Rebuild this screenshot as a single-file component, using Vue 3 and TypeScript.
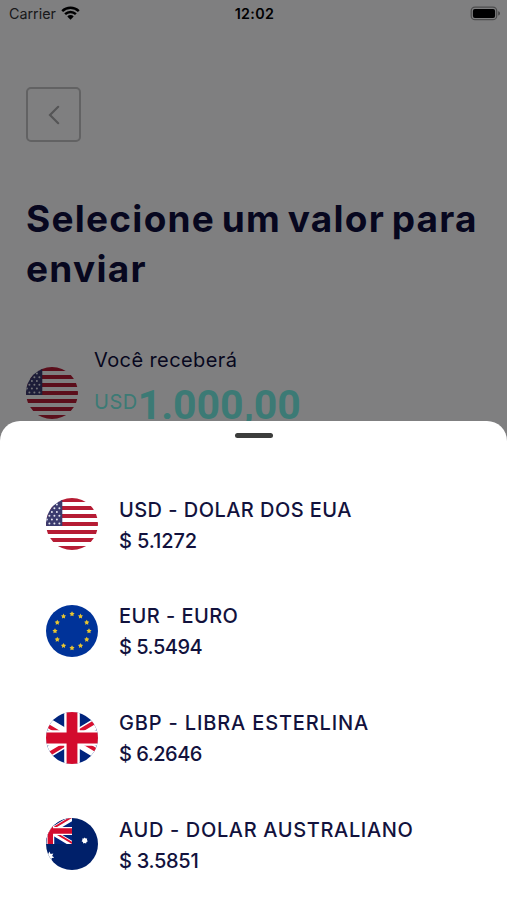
<script setup lang="ts">
interface Currency {
  code: string
  name: string
  rate: string
}

const currencies: Currency[] = [
  { code: 'USD', name: 'DOLAR DOS EUA', rate: '5.1272' },
  { code: 'EUR', name: 'EURO', rate: '5.5494' },
  { code: 'GBP', name: 'LIBRA ESTERLINA', rate: '6.2646' },
  { code: 'AUD', name: 'DOLAR AUSTRALIANO', rate: '3.5851' },
]

function starPoints(cx: number, cy: number, r: number, inner: number, tips: number): string {
  const points: string[] = []
  for (let i = 0; i < tips * 2; i++) {
    const radius = i % 2 === 0 ? r : inner
    const angle = (Math.PI * i) / tips - Math.PI / 2
    points.push(`${(cx + radius * Math.cos(angle)).toFixed(2)},${(cy + radius * Math.sin(angle)).toFixed(2)}`)
  }
  return points.join(' ')
}

const euStars = Array.from({ length: 12 }, (_, i) => {
  const a = (i * Math.PI) / 6
  return starPoints(26 + 17 * Math.sin(a), 26 - 17 * Math.cos(a), 2.7, 1.4, 5)
})

const usStars = Array.from({ length: 7 }, (_, row) =>
  Array.from({ length: 5 }, (_, col) => ({
    x: -1.6 + col * 5 + (row % 2) * 2.5,
    y: 2.6 + row * 3.8,
  })).filter((s) => s.x < 15.5),
).flat()
</script>

<template>
  <div class="phone">
    <svg class="defs" width="0" height="0" aria-hidden="true">
      <defs>
        <clipPath id="disc"><circle cx="26" cy="26" r="26" /></clipPath>
        <clipPath id="jackBox"><path d="M0 0h100v60H0z" /></clipPath>
        <clipPath id="jackSaltire"><path d="M50 30h50v30zM50 30v30H0zM50 30H0V0zM50 30V0h50z" /></clipPath>
        <symbol id="jack" viewBox="0 0 100 60">
          <g clip-path="url(#jackBox)">
            <path d="M0 0h100v60H0z" fill="#00247d" />
            <path d="M0 0l100 60M100 0L0 60" stroke="#fff" stroke-width="12.5" />
            <path d="M0 0l100 60M100 0L0 60" stroke="#d80f30" stroke-width="9" clip-path="url(#jackSaltire)" />
            <path d="M50 0v60M0 30h100" stroke="#fff" stroke-width="18" />
            <path d="M50 0v60M0 30h100" stroke="#d30b2d" stroke-width="12.5" />
          </g>
        </symbol>
        <symbol id="flag-USD" viewBox="0 0 52 52">
          <g clip-path="url(#disc)">
            <path d="M0 0h52v52H0z" fill="#fff" />
            <path v-for="i in 7" :key="i" :d="`M0 ${(i - 1) * 8}h52v4H0z`" fill="#b61c34" />
            <path d="M0 0h16.3v28H0z" fill="#3b3b6e" />
            <circle v-for="(s, i) in usStars" :key="i" :cx="s.x" :cy="s.y" r="1" fill="#e4e4ee" />
          </g>
        </symbol>
        <symbol id="flag-EUR" viewBox="0 0 52 52">
          <circle cx="26" cy="26" r="26" fill="#039" />
          <polygon v-for="(p, i) in euStars" :key="i" :points="p" fill="#e8c530" />
        </symbol>
        <symbol id="flag-GBP" viewBox="0 0 52 52">
          <g clip-path="url(#disc)">
            <use href="#jack" x="-17.33" y="0" width="86.67" height="52" />
          </g>
        </symbol>
        <symbol id="flag-AUD" viewBox="0 0 52 52">
          <g clip-path="url(#disc)">
            <path d="M0 0h52v52H0z" fill="#00206a" />
            <use href="#jack" x="-17.33" y="0" width="43.33" height="26" />
            <polygon :points="starPoints(3.4, 38.5, 5, 2.8, 7)" fill="#fff" />
            <polygon :points="starPoints(38.7, 22.6, 3.2, 2.3, 7)" fill="#fff" />
          </g>
        </symbol>
      </defs>
    </svg>

    <main class="screen">
      <header class="status">
        <div class="carrier">
          <span>Carrier</span>
          <svg width="19" height="14" viewBox="0 0 19 14">
            <path d="M1.2 5.1a12 12 0 0 1 16.6 0M4.1 8.1a7.8 7.8 0 0 1 10.8 0" fill="none" stroke="#000" stroke-width="2.5" />
            <path d="M6.3 10.4a4.6 4.6 0 0 1 6.4 0L9.5 13.7z" />
          </svg>
        </div>
        <time>12:02</time>
        <svg class="battery" width="31" height="15" viewBox="0 0 31 15">
          <rect x="1.2" y="1.2" width="25.5" height="12.5" rx="3.8" fill="none" stroke="#999" stroke-width="1.3" />
          <rect x="2.9" y="2.9" width="22.2" height="9.2" rx="2" />
          <path d="M28.2 5.3c2.4.7 2.4 3.6 0 4.3z" fill="#888" />
        </svg>
      </header>

      <button class="back" type="button" aria-label="Voltar">
        <svg width="12" height="20" viewBox="0 0 12 20">
          <path d="M10.2 1.8L2 10l8.2 8.2" fill="none" stroke="#aaa" stroke-width="2.2" stroke-linecap="round" />
        </svg>
      </button>

      <h1>Selecione um valor para<br />enviar</h1>

      <section class="receive">
        <svg class="flag" width="52" height="52"><use href="#flag-USD" /></svg>
        <div>
          <p class="label">Você receberá</p>
          <p class="amount"><span class="unit">USD</span><strong>1.000,00</strong></p>
        </div>
      </section>
    </main>

    <div class="scrim"></div>

    <section class="sheet">
      <div class="handle"></div>
      <ul>
        <li v-for="c in currencies" :key="c.code">
          <svg class="flag" width="52" height="52"><use :href="`#flag-${c.code}`" /></svg>
          <div :class="['info', c.code.toLowerCase()]">
            <span class="name">{{ c.code }} - {{ c.name }}</span>
            <span class="rate">$ {{ c.rate }}</span>
          </div>
        </li>
      </ul>
    </section>
  </div>
</template>

<style>
body {
  margin: 0;
}
</style>

<style scoped>
.phone {
  position: relative;
  width: 507px;
  height: 900px;
  overflow: hidden;
  background: #fff;
  font-family: Inter, 'Liberation Sans', sans-serif;
}
.defs {
  position: absolute;
}
.flag {
  display: block;
  flex: none;
}
.screen {
  height: 900px;
  box-sizing: border-box;
  padding: 0 26px;
  color: #0f0f3c;
}
.status {
  display: grid;
  grid-template-columns: 1fr auto 1fr;
  align-items: center;
  height: 27px;
  margin: 0 -20px 0 -17px;
  font-size: 14.3px;
  color: #000;
}
.carrier {
  display: flex;
  align-items: center;
  gap: 5px;
}
.carrier svg {
  margin-top: -1px;
}
.carrier span {
  color: #333;
}
time {
  margin-left: -1px;
  font-weight: 600;
  letter-spacing: 0.35px;
}
.battery {
  justify-self: end;
}
.back {
  display: flex;
  align-items: center;
  justify-content: center;
  width: 55px;
  height: 55px;
  margin: 60px 0 0;
  padding: 0;
  border: 2px solid #c4c4c4;
  border-radius: 5px;
  background: transparent;
}
h1 {
  margin: 52px 0 0;
  font-size: 37px;
  font-weight: 700;
  line-height: 50px;
  letter-spacing: 1.25px;
  word-spacing: -3.4px;
  white-space: nowrap;
}
.receive {
  display: flex;
  gap: 16px;
  margin-top: 51px;
}
.receive .flag {
  margin-top: 22px;
}
.receive p {
  margin: 0;
}
.label {
  font-size: 20px;
  line-height: 30px;
  letter-spacing: 0.4px;
}
.amount {
  display: flex;
  color: #78f5e8;
}
.unit {
  font-size: 20px;
  line-height: 24px;
  margin-top: 15px;
  letter-spacing: 0.5px;
}
.amount strong {
  margin-top: 5px;
  font: 700 41px/50px Roboto, sans-serif;
}
.scrim {
  position: absolute;
  inset: 0;
  background: rgba(0, 0, 2, 0.5);
}
.sheet {
  position: absolute;
  left: 0;
  right: 0;
  top: 421px;
  bottom: 0;
  border-radius: 20px 20px 0 0;
  background: #fff;
}
.handle {
  width: 38px;
  height: 5px;
  margin: 12px auto 0;
  border-radius: 3px;
  background: #3c3d3c;
}
ul {
  display: grid;
  gap: 44.75px;
  margin: 55px 0 0;
  padding: 0 46px;
  list-style: none;
}
li {
  display: flex;
  align-items: center;
  gap: 21px;
  height: 62px;
  color: #12123d;
}
.info {
  display: flex;
  flex-direction: column;
  padding-top: 3px;
  font-size: 20px;
  font-weight: 450;
  line-height: 31px;
  white-space: nowrap;
}
.name {
  letter-spacing: 0.45px;
}
.gbp .name {
  letter-spacing: 0.84px;
}
.aud .name {
  letter-spacing: 0.65px;
}
.rate {
  letter-spacing: -0.1px;
}
.eur .rate,
.gbp .rate {
  letter-spacing: -0.5px;
}
.aud .rate {
  letter-spacing: -0.3px;
}
</style>
